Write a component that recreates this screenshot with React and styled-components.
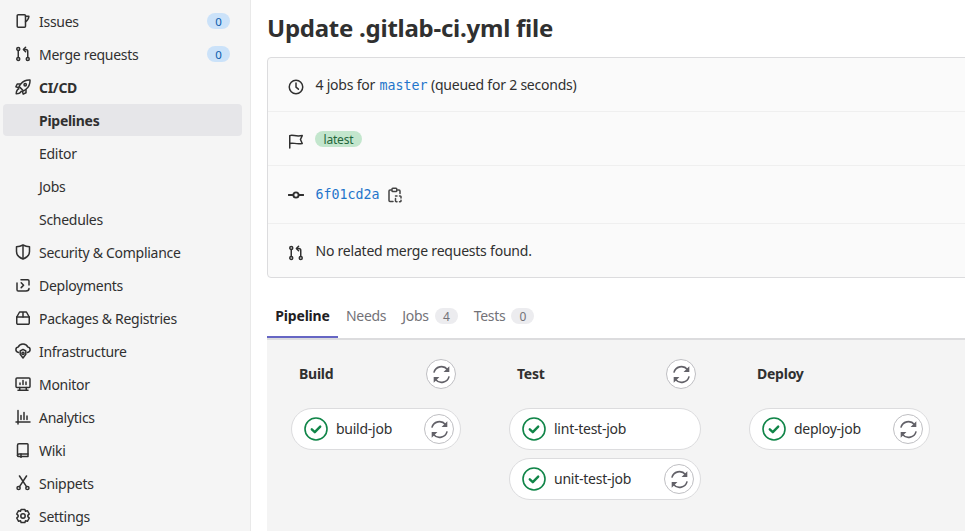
import React from "react";
import styled, { createGlobalStyle } from "styled-components";

const Global = createGlobalStyle`
  html, body {
    margin: 0;
    padding: 0;
    background: #fff;
  }
  * {
    box-sizing: border-box;
  }
`;

const ICONS = {
  issues: (
    <>
      <path d="M3.2 1.75h6.3a1 1 0 0 1 1 1v10.5a1 1 0 0 1-1 1H3.2a1 1 0 0 1-1-1V2.75a1 1 0 0 1 1-1z" />
      <path d="M10.5 3.25h3.4c-.2 2-1.2 4.2-3.4 5.6" />
    </>
  ),
  merge: (
    <>
      <circle cx="3.25" cy="3" r="1.5" />
      <circle cx="3.25" cy="13" r="1.5" />
      <circle cx="12.75" cy="13" r="1.5" />
      <path d="M3.25 4.5v7M12.75 11.5V5.5a2 2 0 0 0-2-2H9" />
      <path d="M10.6 1.2 8.4 3.5l2.2 2.3" />
    </>
  ),
  rocket: (
    <>
      <path d="M15 1c-4-.2-7 1.2-9 3.8L4 7.4l4.6 4.6 2.6-2c2.6-2 4-5 3.8-9z" />
      <circle cx="10.2" cy="5.8" r="1.2" />
      <path d="M5.2 5H2.2L.9 7.8l2.8.9M11 10.8v3l-2.8 1.3-.9-2.8M3.8 9.8C2.2 10.4 1.4 12 1.2 14.8 4 14.6 5.6 13.8 6.2 12.2" />
    </>
  ),
  shield: (
    <>
      <path d="M8 1c2 1.1 4.2 1.7 6.5 1.8v4.8c0 3.2-2.5 6-6.5 7.4-4-1.4-6.5-4.2-6.5-7.4V2.8C3.8 2.7 6 2.1 8 1z" />
      <path d="M8 1.5v13" />
    </>
  ),
  deploy: (
    <>
      <path d="M14 8V4a1.25 1.25 0 0 0-1.25-1.25H6" />
      <path d="M2 6v6.75A1.25 1.25 0 0 0 3.25 14H11c1.6 0 3-1 3-2.5" />
      <path d="M6.2 5.8 8.6 8.2 6.2 10.6" />
    </>
  ),
  package: (
    <>
      <path d="M1.75 7h12.5v6a1.25 1.25 0 0 1-1.25 1.25H3A1.25 1.25 0 0 1 1.75 13z" />
      <path d="M1.75 7 4.6 2h6.8l2.85 5M8 2v5" />
    </>
  ),
  infra: (
    <>
      <path d="M3.6 9.6C1.9 9.3.9 8.2.9 6.8c0-1.4 1-2.5 2.4-2.7C3.9 2.3 5.8 1 8 1s4.1 1.3 4.7 3.1c1.4.2 2.4 1.3 2.4 2.7 0 1.4-1 2.5-2.7 2.8" />
      <path d="M8 6.4 10.8 8v3.4L8 15l-2.8-3.6V8z" />
      <circle cx="8" cy="10.4" r="1.1" />
    </>
  ),
  monitor: (
    <>
      <rect x="1" y="2" width="14" height="9.5" rx="1" />
      <path d="M4.75 11.5v2.75M11.25 11.5v2.75M3 14.25h10M5 8.5V7M8 8.5V4.5M11 8.5V6" />
    </>
  ),
  analytics: (
    <>
      <path d="M3 1.5v11.5M1 13h14" />
      <path d="M6 10.5V6.5M9 10.5V3.5M12 10.5V7M3 15v-2" />
    </>
  ),
  wiki: (
    <>
      <path d="M4 1.75h8.25a.75.75 0 0 1 .75.75V12H4a1.5 1.5 0 0 0-1.5 1.5V3.25A1.5 1.5 0 0 1 4 1.75z" />
      <path d="M2.5 13.5A1.25 1.25 0 0 0 3.75 14.5H13V12M6 12v3.5" />
    </>
  ),
  scissors: (
    <>
      <circle cx="3.6" cy="13" r="1.6" />
      <circle cx="12.4" cy="13" r="1.6" />
      <path d="M4.5 11.6 11.5 1M11.5 11.6 4.5 1" />
    </>
  ),
  settings: (
    <>
      <path d="M6.1 1.4h3.8l.6 1.9 1.9-.6 1.9 3.3-1.5 1.4.1.6-.1.6 1.5 1.4-1.9 3.3-1.9-.6-.6 1.9H6.1l-.6-1.9-1.9.6-1.9-3.3L3.2 8.6 3.1 8l.1-.6L1.7 6l1.9-3.3 1.9.6z" />
      <circle cx="8" cy="8" r="2.2" />
    </>
  ),
  clock: (
    <>
      <circle cx="8" cy="8" r="6.75" />
      <path d="M8 4v4.2l2.4 2" />
    </>
  ),
  flag: <path d="M1.75 15V2.6c3.4-1.4 5.6 1.6 12.5 0l-1.8 3.9 1.8 4c-6.9 1.2-9-1.4-12.5 0" />,
  commit: (
    <>
      <circle cx="8" cy="8" r="2.6" strokeWidth="1.9" />
      <path d="M.5 8h4.5M11 8h4.5" strokeWidth="1.9" />
    </>
  ),
  copy: (
    <>
      <path d="M4.4 3H3a1 1 0 0 0-1 1v9.5a1 1 0 0 0 1 1h3M10.6 3H12a1 1 0 0 1 1 1v2.5" />
      <rect x="5" y="1.25" width="4.75" height="3.25" rx="0.75" />
      <path d="M8.5 9h1.5M12.5 9h.75a.75.75 0 0 1 .75.75V11M14 13.2v.8a.75.75 0 0 1-.75.75H12.5M10 14.75H9.25a.75.75 0 0 1-.75-.75V11.5" />
    </>
  ),
};

const SvgIcon = styled.svg`
  width: ${(p) => p.$size || 16}px;
  height: ${(p) => p.$size || 16}px;
  flex: none;
  fill: none;
  stroke: currentColor;
  stroke-width: 1.5;
  stroke-linecap: round;
  stroke-linejoin: round;
  margin-top: ${(p) => p.$drop || 0}px;
`;

function Icon({ name, size, drop }) {
  return (
    <SvgIcon $size={size} $drop={drop} viewBox="0 0 16 16" aria-hidden="true">
      {ICONS[name]}
    </SvgIcon>
  );
}

const Page = styled.div`
  display: flex;
  width: 965px;
  height: 531px;
  overflow: hidden;
  font-family: "Noto Sans", "Open Sans", sans-serif;
  font-size: 14px;
  color: #303030;
  background: #fff;
`;

const Sidebar = styled.nav`
  flex: none;
  width: 251px;
  height: 100%;
  padding: 5px 8px 0 3px;
  display: flex;
  flex-direction: column;
  gap: 1px;
  overflow: hidden;
  background: #f5f5f5;
  border-right: 1px solid #e9e9e9;
`;

const NavItem = styled.a`
  flex: none;
  display: flex;
  align-items: center;
  height: 32px;
  padding: 0 12px;
  gap: 8px;
  border-radius: 4px;
  letter-spacing: -0.28px;
  color: #303030;
  font-weight: ${(p) => (p.$strong ? 700 : 400)};
  background: ${(p) => (p.$active ? "#e6e6e9" : "transparent")};
`;

const NavLabel = styled.span`
  flex: 1;
  margin-left: ${(p) => (p.$sub ? "24px" : "0")};
  white-space: nowrap;
`;

const CountBadge = styled.span`
  display: flex;
  align-items: center;
  justify-content: center;
  width: 23px;
  height: 16px;
  border-radius: 8px;
  font-size: 11.5px;
  color: #0b5cad;
  background: #cbe2f9;
`;

const Main = styled.main`
  flex: 1;
  min-width: 0;
  padding-left: 16px;
`;

const Title = styled.h1`
  margin: 12px 0 14px;
  height: 31px;
  font-size: 24px;
  line-height: 31px;
  font-weight: 700;
  letter-spacing: -0.25px;
  color: #303030;
`;

const InfoCard = styled.section`
  width: 720px;
  background: #fafafa;
  border: 1px solid #dcdcde;
  border-radius: 4px;
`;

const InfoRow = styled.div`
  display: flex;
  align-items: center;
  height: ${(p) => p.$height}px;
  padding: 0 0 0 20px;
  gap: 11.5px;
  letter-spacing: -0.22px;
  border-top: ${(p) => (p.$first ? "none" : "1px solid #efefef")};
`;

const Mono = styled.span`
  margin-left: ${(p) => (p.$inline ? "1px" : "0")};
  font-family: "DejaVu Sans Mono", "Liberation Mono", monospace;
  font-size: 13.3px;
  letter-spacing: 0;
  color: #1f75cb;
`;

const Tag = styled.span`
  display: flex;
  align-items: center;
  height: 16px;
  margin: 1px 0 0 -0.5px;
  padding: 0 8.5px;
  border-radius: 8px;
  font-size: 12px;
  letter-spacing: -0.2px;
  color: #24663b;
  background: #c3e6cd;
`;

const CopyGlyph = styled.span`
  display: flex;
  margin-left: -4px;
  color: #444;
`;

const Tabs = styled.div`
  display: flex;
  align-items: flex-end;
  height: 62px;
  border-bottom: 2px solid #dcdcde;
`;

const Tab = styled.div`
  display: flex;
  align-items: center;
  justify-content: ${(p) => (p.$active ? "center" : "flex-start")};
  width: ${(p) => (p.$active ? "71px" : "auto")};
  height: 41px;
  padding: 0 8px 3px;
  gap: 6px;
  letter-spacing: ${(p) => (p.$active ? "-0.2px" : "-0.3px")};
  color: ${(p) => (p.$active ? "#1f1e24" : "#737278")};
  font-weight: ${(p) => (p.$active ? 700 : 400)};
  border-bottom: 2px solid ${(p) => (p.$active ? "#6666c4" : "transparent")};
`;

const TabCount = styled.span`
  display: flex;
  align-items: center;
  justify-content: center;
  width: 23px;
  height: 16px;
  margin-top: 2px;
  border-radius: 8px;
  font-size: 12px;
  color: #737278;
  background: #ececef;
`;

const Graph = styled.div`
  display: flex;
  gap: 48px;
  height: 200px;
  padding: 19px 0 0 24px;
  background: #f4f4f4;
`;

const Stage = styled.div`
  display: flex;
  flex-direction: column;
  width: ${(p) => p.$width}px;
`;

const StageHeader = styled.div`
  display: flex;
  align-items: center;
  justify-content: space-between;
  height: 30px;
  margin-bottom: 19px;
  padding: 0 5px 0 8px;
  font-weight: 700;
  letter-spacing: -0.25px;
`;

const StageTitle = styled.span`
  padding-bottom: 2px;
`;

const JobList = styled.div`
  display: flex;
  flex-direction: column;
  gap: 8px;
`;

const Job = styled.div`
  display: flex;
  align-items: center;
  height: 42px;
  padding: 0 6px 0 12px;
  gap: 8px;
  border: 1px solid #dcdcde;
  border-radius: 21px;
  background: #fff;
`;

const JobName = styled.span`
  flex: 1;
  padding-bottom: 2px;
  white-space: nowrap;
  letter-spacing: -0.25px;
`;

const RoundButton = styled.button`
  display: flex;
  align-items: center;
  justify-content: center;
  flex: none;
  width: 30px;
  height: 30px;
  padding: 0;
  border: 1px solid #bfbfc3;
  border-radius: 50%;
  background: #fff;
  color: #626168;
`;

function RetryIcon() {
  return (
    <svg width="23" height="23" viewBox="0 0 20 20" aria-hidden="true">
      <path d="M3.4 8.4A6.8 6.8 0 0 1 15.2 5.6" fill="none" stroke="currentColor" strokeWidth="1.4" />
      <path d="M16.8 2.9v5h-5z" fill="currentColor" />
      <path d="M16.6 11.6A6.8 6.8 0 0 1 4.8 14.4" fill="none" stroke="currentColor" strokeWidth="1.4" />
      <path d="M3.2 17.1v-5h5z" fill="currentColor" />
    </svg>
  );
}

const StatusSvg = styled.svg`
  flex: none;
`;

function StatusIcon() {
  return (
    <StatusSvg width="24" height="24" viewBox="0 0 24 24" aria-hidden="true">
      <circle cx="12" cy="12" r="11" fill="#fff" stroke="#108548" strokeWidth="1.6" />
      <path d="M7.8 12.3l3 2.9 5.4-5.6" fill="none" stroke="#108548" strokeWidth="2.4" strokeLinecap="round" strokeLinejoin="round" />
    </StatusSvg>
  );
}

const NAV = [
  { label: "Issues", icon: "issues", count: 0 },
  { label: "Merge requests", icon: "merge", count: 0 },
  { label: "CI/CD", icon: "rocket", strong: true },
  { label: "Pipelines", sub: true, strong: true, active: true },
  { label: "Editor", sub: true },
  { label: "Jobs", sub: true },
  { label: "Schedules", sub: true },
  { label: "Security & Compliance", icon: "shield" },
  { label: "Deployments", icon: "deploy" },
  { label: "Packages & Registries", icon: "package" },
  { label: "Infrastructure", icon: "infra" },
  { label: "Monitor", icon: "monitor" },
  { label: "Analytics", icon: "analytics" },
  { label: "Wiki", icon: "wiki" },
  { label: "Snippets", icon: "scissors" },
  { label: "Settings", icon: "settings" },
];

const STAGES = [
  { title: "Build", width: 170, retry: true, jobs: [{ name: "build-job", retry: true }] },
  {
    title: "Test",
    width: 192,
    retry: true,
    jobs: [{ name: "lint-test-job" }, { name: "unit-test-job", retry: true }],
  },
  { title: "Deploy", width: 181, jobs: [{ name: "deploy-job", retry: true }] },
];

export default function App() {
  return (
    <Page>
      <Global />
      <Sidebar>
        {NAV.map((item) => (
          <NavItem key={item.label} $strong={item.strong} $active={item.active}>
            {item.icon && <Icon name={item.icon} />}
            <NavLabel $sub={item.sub}>{item.label}</NavLabel>
            {item.count !== undefined && <CountBadge>{item.count}</CountBadge>}
          </NavItem>
        ))}
      </Sidebar>
      <Main>
        <Title>Update .gitlab-ci.yml file</Title>
        <InfoCard>
          <InfoRow $first $height={53}>
            <Icon name="clock" drop={4} />
            <span>
              4 jobs for <Mono $inline>master</Mono> (queued for 2 seconds)
            </span>
          </InfoRow>
          <InfoRow $height={54}>
            <Icon name="flag" drop={4} />
            <Tag>latest</Tag>
          </InfoRow>
          <InfoRow $height={58}>
            <Icon name="commit" />
            <Mono>6f01cd2a</Mono>
            <CopyGlyph>
              <Icon name="copy" />
            </CopyGlyph>
          </InfoRow>
          <InfoRow $height={54}>
            <Icon name="merge" drop={4} />
            <span>No related merge requests found.</span>
          </InfoRow>
        </InfoCard>
        <Tabs>
          <Tab $active>Pipeline</Tab>
          <Tab>Needs</Tab>
          <Tab>
            Jobs <TabCount>4</TabCount>
          </Tab>
          <Tab>
            Tests <TabCount>0</TabCount>
          </Tab>
        </Tabs>
        <Graph>
          {STAGES.map((stage) => (
            <Stage key={stage.title} $width={stage.width}>
              <StageHeader>
                <StageTitle>{stage.title}</StageTitle>
                {stage.retry && (
                  <RoundButton aria-label="Retry stage">
                    <RetryIcon />
                  </RoundButton>
                )}
              </StageHeader>
              <JobList>
                {stage.jobs.map((job) => (
                  <Job key={job.name}>
                    <StatusIcon />
                    <JobName>{job.name}</JobName>
                    {job.retry && (
                      <RoundButton aria-label="Retry job">
                        <RetryIcon />
                      </RoundButton>
                    )}
                  </Job>
                ))}
              </JobList>
            </Stage>
          ))}
        </Graph>
      </Main>
    </Page>
  );
}
